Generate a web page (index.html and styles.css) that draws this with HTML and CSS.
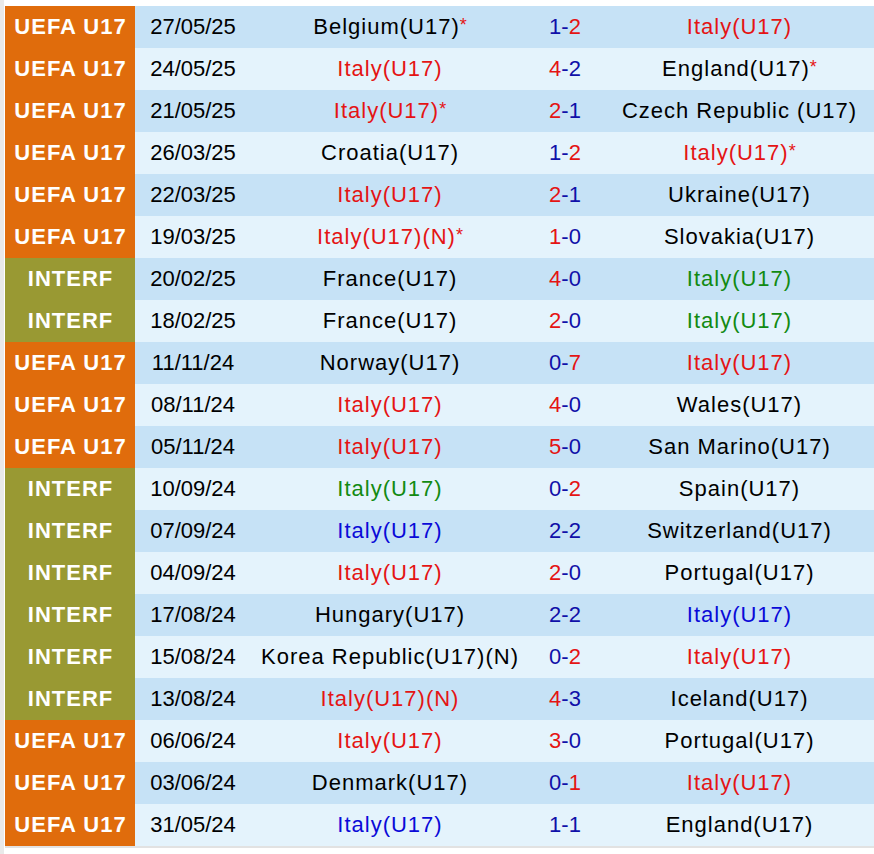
FILE: index.html
```html
<!DOCTYPE html>
<html>
<head>
<meta charset="utf-8">
<link rel="stylesheet" href="styles.css">
</head>
<body>
<div class="page">
<table class="results">
<colgroup>
<col class="c-comp"><col class="c-date"><col class="c-home"><col class="c-score"><col class="c-away">
</colgroup>
<tbody>
<tr class="odd"><td class="comp uefa">UEFA U17</td><td class="date">27/05/25</td><td class="team">Belgium(U17)<span class="star">*</span></td><td class="score"><span class="l">1</span>-<span class="w">2</span></td><td class="team win">Italy(U17)</td></tr>
<tr class="even"><td class="comp uefa">UEFA U17</td><td class="date">24/05/25</td><td class="team win">Italy(U17)</td><td class="score"><span class="w">4</span>-<span class="l">2</span></td><td class="team">England(U17)<span class="star">*</span></td></tr>
<tr class="odd"><td class="comp uefa">UEFA U17</td><td class="date">21/05/25</td><td class="team win">Italy(U17)<span class="star">*</span></td><td class="score"><span class="w">2</span>-<span class="l">1</span></td><td class="team">Czech Republic (U17)</td></tr>
<tr class="even"><td class="comp uefa">UEFA U17</td><td class="date">26/03/25</td><td class="team">Croatia(U17)</td><td class="score"><span class="l">1</span>-<span class="w">2</span></td><td class="team win">Italy(U17)<span class="star">*</span></td></tr>
<tr class="odd"><td class="comp uefa">UEFA U17</td><td class="date">22/03/25</td><td class="team win">Italy(U17)</td><td class="score"><span class="w">2</span>-<span class="l">1</span></td><td class="team">Ukraine(U17)</td></tr>
<tr class="even"><td class="comp uefa">UEFA U17</td><td class="date">19/03/25</td><td class="team win">Italy(U17)(N)<span class="star">*</span></td><td class="score"><span class="w">1</span>-<span class="l">0</span></td><td class="team">Slovakia(U17)</td></tr>
<tr class="odd"><td class="comp interf">INTERF</td><td class="date">20/02/25</td><td class="team">France(U17)</td><td class="score"><span class="w">4</span>-<span class="l">0</span></td><td class="team loss">Italy(U17)</td></tr>
<tr class="even"><td class="comp interf">INTERF</td><td class="date">18/02/25</td><td class="team">France(U17)</td><td class="score"><span class="w">2</span>-<span class="l">0</span></td><td class="team loss">Italy(U17)</td></tr>
<tr class="odd"><td class="comp uefa">UEFA U17</td><td class="date">11/11/24</td><td class="team">Norway(U17)</td><td class="score"><span class="l">0</span>-<span class="w">7</span></td><td class="team win">Italy(U17)</td></tr>
<tr class="even"><td class="comp uefa">UEFA U17</td><td class="date">08/11/24</td><td class="team win">Italy(U17)</td><td class="score"><span class="w">4</span>-<span class="l">0</span></td><td class="team">Wales(U17)</td></tr>
<tr class="odd"><td class="comp uefa">UEFA U17</td><td class="date">05/11/24</td><td class="team win">Italy(U17)</td><td class="score"><span class="w">5</span>-<span class="l">0</span></td><td class="team">San Marino(U17)</td></tr>
<tr class="even"><td class="comp interf">INTERF</td><td class="date">10/09/24</td><td class="team loss">Italy(U17)</td><td class="score"><span class="l">0</span>-<span class="w">2</span></td><td class="team">Spain(U17)</td></tr>
<tr class="odd"><td class="comp interf">INTERF</td><td class="date">07/09/24</td><td class="team draw">Italy(U17)</td><td class="score"><span class="l">2</span>-<span class="l">2</span></td><td class="team">Switzerland(U17)</td></tr>
<tr class="even"><td class="comp interf">INTERF</td><td class="date">04/09/24</td><td class="team win">Italy(U17)</td><td class="score"><span class="w">2</span>-<span class="l">0</span></td><td class="team">Portugal(U17)</td></tr>
<tr class="odd"><td class="comp interf">INTERF</td><td class="date">17/08/24</td><td class="team">Hungary(U17)</td><td class="score"><span class="l">2</span>-<span class="l">2</span></td><td class="team draw">Italy(U17)</td></tr>
<tr class="even"><td class="comp interf">INTERF</td><td class="date">15/08/24</td><td class="team">Korea Republic(U17)(N)</td><td class="score"><span class="l">0</span>-<span class="w">2</span></td><td class="team win">Italy(U17)</td></tr>
<tr class="odd"><td class="comp interf">INTERF</td><td class="date">13/08/24</td><td class="team win">Italy(U17)(N)</td><td class="score"><span class="w">4</span>-<span class="l">3</span></td><td class="team">Iceland(U17)</td></tr>
<tr class="even"><td class="comp uefa">UEFA U17</td><td class="date">06/06/24</td><td class="team win">Italy(U17)</td><td class="score"><span class="w">3</span>-<span class="l">0</span></td><td class="team">Portugal(U17)</td></tr>
<tr class="odd"><td class="comp uefa">UEFA U17</td><td class="date">03/06/24</td><td class="team">Denmark(U17)</td><td class="score"><span class="l">0</span>-<span class="w">1</span></td><td class="team win">Italy(U17)</td></tr>
<tr class="even"><td class="comp uefa">UEFA U17</td><td class="date">31/05/24</td><td class="team draw">Italy(U17)</td><td class="score"><span class="l">1</span>-<span class="l">1</span></td><td class="team">England(U17)</td></tr>
</tbody>
</table>
</div>
</body>
</html>
```

FILE: styles.css
```css
html, body {
  margin: 0;
  padding: 0;
  background: #ffffff;
}
.page {
  min-height: 854px;
  box-sizing: border-box;
  border-left: 4px solid #e9e9e9;
  padding: 6px 0 0 1px;
  font-family: "Liberation Sans", Arial, sans-serif;
}
.results {
  width: 869px;
  border-collapse: collapse;
  table-layout: fixed;
  border-bottom: 2px solid #e2e2e2;
}
.c-comp { width: 130px; }
.c-date { width: 120px; }
.c-home { width: 270px; }
.c-score { width: 80px; }
.c-away { width: 269px; }
.results td {
  height: 42px;
  padding: 0;
  text-align: center;
  vertical-align: middle;
  font-size: 22px;
  color: #000000;
  white-space: nowrap;
}
.odd td { background: #c6e2f6; }
.even td { background: #e4f3fc; }
.results td.comp {
  color: #ffffff;
  font-weight: bold;
  font-size: 22px;
  letter-spacing: 1px;
  text-indent: 1px;
}
.results td.uefa { background: #e06c0c; }
.results td.interf { background: #999933; }
.results td.date { padding-right: 4px; }
.results td.team {
  letter-spacing: 1px;
}
.results td.win { color: #e41414; }
.results td.loss { color: #128a12; }
.results td.draw { color: #0a0ad8; }
.results td.score { color: #1010a8; }
.w { color: #e41414; }
.l { color: #1010a8; }
.star {
  color: #e41414;
  font-size: 18px;
  vertical-align: 3px;
  letter-spacing: 0;
}
```
